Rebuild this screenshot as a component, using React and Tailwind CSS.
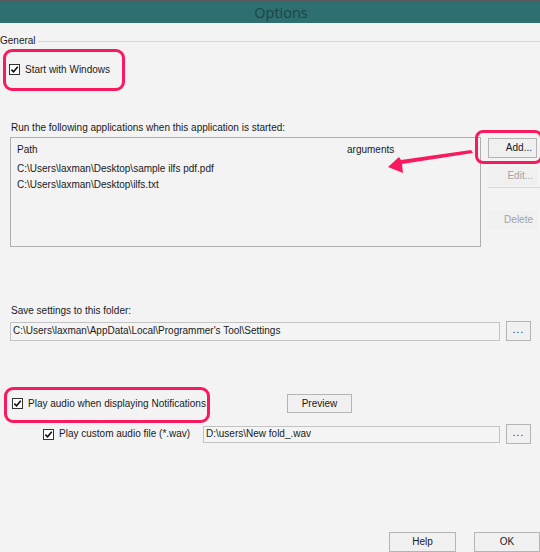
import React from 'react';

function Check({ className = '' }) {
  return (
    <span className={`flex h-[11px] w-[11px] shrink-0 items-center justify-center border border-[#333] bg-white ${className}`}>
      <svg viewBox="0 0 10 10" className="h-[9px] w-[9px]">
        <path d="M1.5 5.2 L4 7.6 L8.6 2" fill="none" stroke="#111" strokeWidth="1.8" />
      </svg>
    </span>
  );
}

function Btn({ children, className = '', disabled = false }) {
  return (
    <div
      className={`flex shrink-0 items-center justify-center border bg-[#f0f0f0] ${
        disabled ? 'border-transparent text-[#a3a3a3]' : 'border-[#b4b4b4] text-[#1a1a1a]'
      } ${className}`}
    >
      {children}
    </div>
  );
}

export default function App() {
  return (
    <div className="relative h-[552px] w-[540px] overflow-hidden bg-[#f3f3f3] text-[10px] leading-[14px] text-[#1a1a1a] [font-family:'Liberation_Sans',Arial,sans-serif]">
      {/* title bar */}
      <div className="flex h-[23px] items-center justify-center border-t-2 border-[#5a5a5a] bg-[#2e7072] pl-[22px] text-[14.5px] text-[#1b4446] [font-family:'Open_Sans',sans-serif]">
        Options
      </div>

      {/* General group header */}
      <div className="mt-[11px] flex h-[14px] items-center">
        <span className="ml-0">General</span>
        <div className="ml-[2px] h-px flex-1 bg-[#d6d6d6]" />
      </div>

      <div className="mt-[14px] flex h-[15px] items-center pl-[9px]">
        <Check />
        <span className="ml-[5px]">Start with Windows</span>
      </div>

      <div className="mt-[44px] pl-[11px]">Run the following applications when this application is started:</div>

      <div className="mt-[2px] flex">
        <div className="ml-[10px] h-[110px] w-[471px] border border-[#b0b0b0] bg-[#f3f3f3] px-[6px] pt-[5px]">
          <div className="flex">
            <span className="w-[330px]">Path</span>
            <span>arguments</span>
          </div>
          <div className="mt-[5px]">C:\Users\laxman\Desktop\sample ilfs pdf.pdf</div>
          <div className="mt-[2px]">C:\Users\laxman\Desktop\ilfs.txt</div>
        </div>
        <div className="ml-[7px] flex w-[52px] flex-col">
          <Btn className="mt-px h-[20px] w-[49px] justify-end pr-[4px]">Add...</Btn>
          <Btn disabled className="mt-[9px] h-[18px] w-[49px] justify-end pr-[3px]">Edit...</Btn>
          <div className="mt-[2px] h-px w-[52px] bg-[#d8d8d8]" />
          <Btn disabled className="mt-[23px] h-[18px] w-[49px] justify-end pr-[3px]">Delete</Btn>
        </div>
      </div>

      <div className="mt-[57px] pl-[11px]">Save settings to this folder:</div>
      <div className="mt-[3px] flex items-center">
        <div className="ml-[10px] flex h-[19px] w-[490px] items-center border border-[#c3c3c3] bg-[#f4f4f4] pl-[2px]">
          C:\Users\laxman\AppData\Local\Programmer's Tool\Settings
        </div>
        <Btn className="ml-[6px] h-[20px] w-[25px] pb-[3px] tracking-[1px]">...</Btn>
      </div>

      <div className="mt-[53px] flex h-[19px] items-center">
        <Check className="ml-[12px]" />
        <span className="ml-[5px] w-[259px]">Play audio when displaying Notifications</span>
        <Btn className="h-[19px] w-[65px]">Preview</Btn>
      </div>

      <div className="mt-[12px] flex h-[18px] items-center">
        <Check className="ml-[43px]" />
        <span className="ml-[5px] w-[144px]">Play custom audio file (*.wav)</span>
        <div className="flex h-[17px] w-[297px] items-center border border-[#c3c3c3] bg-[#f4f4f4] pl-[2px]">
          D:\users\New fold_.wav
        </div>
        <Btn className="ml-[6px] h-[20px] w-[25px] pb-[3px] tracking-[1px]">...</Btn>
      </div>

      <div className="mt-[89px] flex">
        <Btn className="ml-[389px] h-[20px] w-[67px]">Help</Btn>
        <Btn className="ml-[18px] h-[20px] w-[66px] border-[#78b2e8]">OK</Btn>
      </div>

      {/* annotation overlays */}
      <div className="absolute left-[3px] top-[49px] h-[42px] w-[122px] rounded-[9px] border-[3px] border-[#f8195f]" />
      <div className="absolute left-[475px] top-[130px] h-[34px] w-[68px] rounded-[8px] border-[3px] border-[#f8195f]" />
      <div className="absolute left-[4px] top-[387px] h-[36px] w-[206px] rounded-[9px] border-[3px] border-[#f8195f]" />
      <svg className="absolute left-[385px] top-[145px] h-[35px] w-[90px]" viewBox="0 0 90 35">
        <polygon points="86,5 88,8 17,19 18,28 3,22 14,12 16,15" fill="#f8195f" />
      </svg>
    </div>
  );
}
